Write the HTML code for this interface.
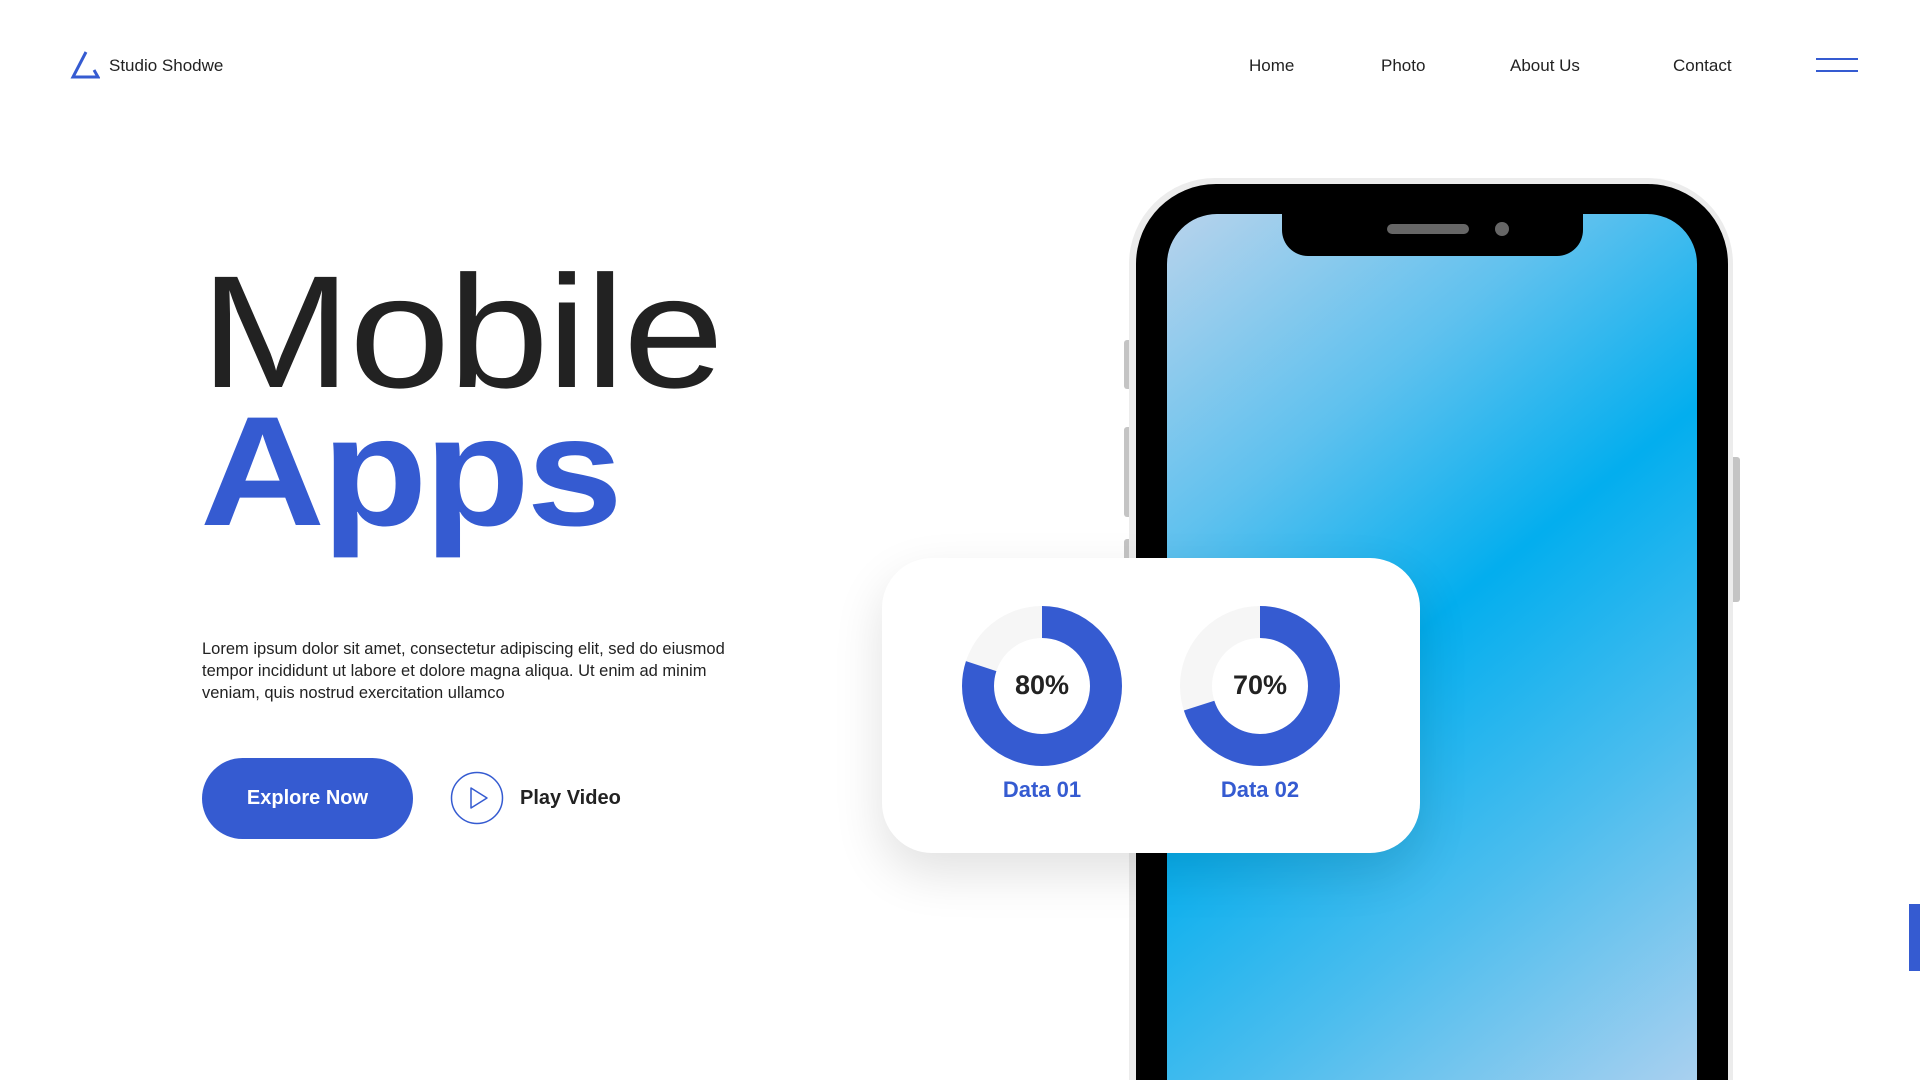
<!DOCTYPE html>
<html><head><meta charset="utf-8"><style>
*{margin:0;padding:0;box-sizing:border-box}
html,body{width:1920px;height:1080px;overflow:hidden}
body{background:#fff;position:relative;font-family:"Liberation Sans",sans-serif;color:#222}
#wrap{position:absolute;left:0;top:0;width:1920px;height:1080px;overflow:hidden}
.abs{position:absolute}
.nav{font-size:17px;color:#222;top:56px}
</style></head><body><div id="wrap">
<svg class="abs" style="left:70px;top:50px" width="30" height="29" viewBox="0 0 30 29"><path d="M16 2 L3 27 L28 27 L24 20" fill="none" stroke="#355bd1" stroke-width="3"/></svg>
<div class="abs" style="left:109px;top:56px;font-size:17px">Studio Shodwe</div>
<div class="abs nav" style="left:1249px">Home</div>
<div class="abs nav" style="left:1381px">Photo</div>
<div class="abs nav" style="left:1510px">About Us</div>
<div class="abs nav" style="left:1673px">Contact</div>
<div class="abs" style="left:1816px;top:58px;width:42px;height:2px;background:#355bd1"></div>
<div class="abs" style="left:1816px;top:70px;width:42px;height:2px;background:#355bd1"></div>

<div class="abs" style="left:200px;top:242px;font-size:160px;line-height:180px;color:#222;letter-spacing:-2px;transform:scaleX(1.136);transform-origin:0 0;white-space:nowrap">Mobile</div>
<div class="abs" style="left:200px;top:382px;font-size:156px;line-height:180px;font-weight:bold;color:#355bd1;letter-spacing:-3px;transform:scaleX(1.11);transform-origin:0 0;white-space:nowrap">Apps</div>

<div class="abs" style="left:202px;top:638px;font-size:16.5px;line-height:22px;color:#222;width:560px">Lorem ipsum dolor sit amet, consectetur adipiscing elit, sed do eiusmod tempor incididunt ut labore et dolore magna aliqua. Ut enim ad minim veniam, quis nostrud exercitation ullamco</div>

<div class="abs" style="left:202px;top:758px;width:211px;height:81px;border-radius:41px;background:#355bd1;color:#fff;font-weight:bold;font-size:20px;line-height:81px;text-align:center">Explore Now</div>
<svg class="abs" style="left:450px;top:771px" width="54" height="54" viewBox="0 0 54 54"><circle cx="27" cy="27" r="25.5" fill="none" stroke="#355bd1" stroke-width="1.5"/><path d="M21 17 L37 27 L21 37 Z" fill="none" stroke="#355bd1" stroke-width="1.5" stroke-linejoin="round"/></svg>
<div class="abs" style="left:520px;top:787px;font-size:20px;font-weight:bold;color:#222">Play Video</div>

<div class="abs" style="left:1124px;top:340px;width:8px;height:49px;background:#c4c4c4;border-radius:3px"></div>
<div class="abs" style="left:1124px;top:427px;width:8px;height:90px;background:#c4c4c4;border-radius:3px"></div>
<div class="abs" style="left:1124px;top:539px;width:8px;height:30px;background:#c4c4c4;border-radius:3px"></div>
<div class="abs" style="left:1730px;top:457px;width:10px;height:145px;background:#c4c4c4;border-radius:3px"></div>
<div class="abs" style="left:1129px;top:178px;width:604px;height:902px;border-radius:86px 86px 0 0;background:#ececec"></div>
<div class="abs" style="left:1136px;top:184px;width:592px;height:896px;border-radius:80px 80px 0 0;background:#000"></div>
<div class="abs" style="left:1167px;top:214px;width:530px;height:866px;border-radius:50px 50px 0 0;background:linear-gradient(141deg,#b8d3ec 0%,#5fc1ee 26%,#03aeee 48%,#4bbdee 72%,#a9d0ef 100%)"></div>
<div class="abs" style="left:1282px;top:200px;width:301px;height:56px;border-radius:0 0 26px 26px;background:#000"></div>
<div class="abs" style="left:1387px;top:224px;width:82px;height:10px;border-radius:5px;background:#666"></div>
<div class="abs" style="left:1495px;top:222px;width:14px;height:14px;border-radius:50%;background:#666"></div>

<div class="abs" style="left:882px;top:558px;width:538px;height:295px;border-radius:50px;background:#fff;box-shadow:0 20px 50px rgba(0,0,0,0.12)"></div>
<svg class="abs" style="left:962px;top:606px" width="160" height="160" viewBox="0 0 160 160"><circle cx="80" cy="80" r="64" fill="none" stroke="#f6f6f6" stroke-width="32"/><circle cx="80" cy="80" r="64" fill="none" stroke="#355bd1" stroke-width="32" stroke-dasharray="321.7 402.1" transform="rotate(-90 80 80)"/></svg>
<svg class="abs" style="left:1180px;top:606px" width="160" height="160" viewBox="0 0 160 160"><circle cx="80" cy="80" r="64" fill="none" stroke="#f6f6f6" stroke-width="32"/><circle cx="80" cy="80" r="64" fill="none" stroke="#355bd1" stroke-width="32" stroke-dasharray="281.5 402.1" transform="rotate(-90 80 80)"/></svg>
<div class="abs" style="left:962px;top:670px;width:160px;text-align:center;font-size:27px;font-weight:bold;color:#222">80%</div>
<div class="abs" style="left:1180px;top:670px;width:160px;text-align:center;font-size:27px;font-weight:bold;color:#222">70%</div>
<div class="abs" style="left:962px;top:777px;width:160px;text-align:center;font-size:22px;font-weight:bold;color:#355bd1">Data 01</div>
<div class="abs" style="left:1180px;top:777px;width:160px;text-align:center;font-size:22px;font-weight:bold;color:#355bd1">Data 02</div>

<div class="abs" style="left:1909px;top:904px;width:11px;height:67px;background:#355bd1"></div>
</div></body></html>
